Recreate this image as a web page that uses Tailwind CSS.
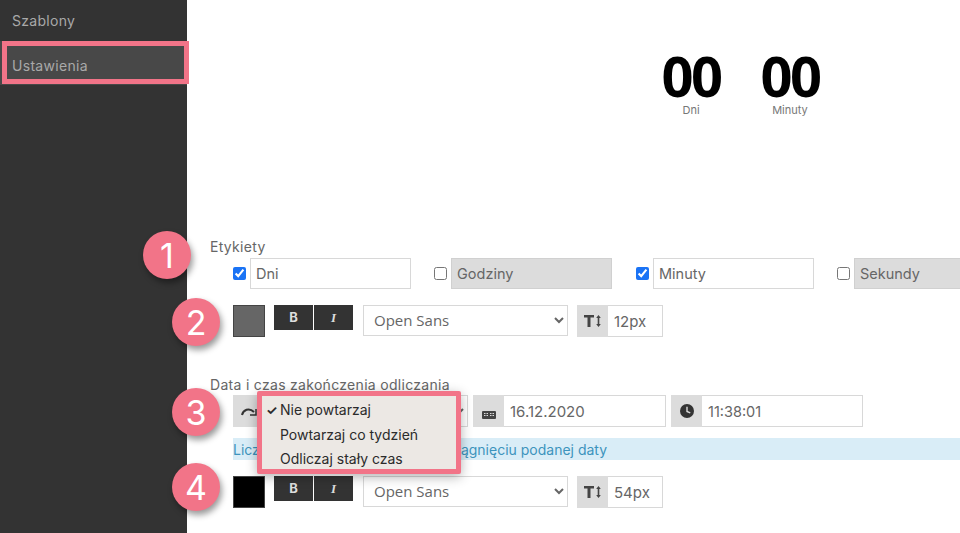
<!DOCTYPE html>
<html lang="pl">
<head>
    <meta charset="UTF-8">
    <meta name="viewport" content="width=device-width, initial-scale=1.0">
    <title>Ustawienia</title>
    <script src="https://cdn.jsdelivr.net/npm/@tailwindcss/browser@4"></script>
</head>
<body class="bg-white font-['Inter',sans-serif]">
<div class="relative flex h-[533px] w-[960px] overflow-hidden">

    <!-- Sidebar -->
    <aside class="w-[187px] shrink-0 bg-[#333333] text-[14px] tracking-[0.3px] text-[#a9a9a9]">
        <div class="h-[41px] pl-3 pt-[12px] leading-[18px]">Szablony</div>
        <div class="h-[44px] pl-3 pt-[16px] leading-[18px] bg-[#484848]">Ustawienia</div>
    </aside>

    <!-- Main -->
    <main class="min-w-0 flex-1 pl-[23px] text-[#666666]">
        <!-- Counter preview -->
        <div class="flex h-[238px] pl-[451px] pt-[48px]">
            <div class="w-[99px]">
                <div class="w-[60px] text-center font-['Open_Sans',sans-serif] text-[56px] font-bold leading-[54px] tracking-[-2.500px] text-black">00</div>
                <div class="mt-px w-[60px] text-center text-[11px] leading-[14px] text-[#777777]">Dni</div>
            </div>
            <div>
                <div class="w-[60px] text-center font-['Open_Sans',sans-serif] text-[56px] font-bold leading-[54px] tracking-[-2.500px] text-black">00</div>
                <div class="mt-px w-[60px] text-center text-[11px] leading-[14px] text-[#777777]">Minuty</div>
            </div>
        </div>

        <!-- Labels -->
        <div class="text-[14px] leading-[18px] tracking-[0.3px]">Etykiety</div>
        <div class="mt-[2px] flex h-[31px] w-[760px] items-center pl-[23px] text-[14.500px]">
            <input type="checkbox" checked class="m-0 size-[13px] shrink-0 accent-[#1a73f5]">
            <input value="Dni" class="ml-[4px] h-[31px] w-[161px] border border-[#d8d8d8] px-[5px] text-[#666666]">
            <input type="checkbox" class="m-0 ml-[23px] size-[13px] shrink-0">
            <input value="Godziny" disabled class="ml-[4px] h-[31px] w-[161px] border border-[#d0d0d0] bg-[#dcdcdc] px-[5px] text-[#666666]">
            <input type="checkbox" checked class="m-0 ml-[24px] size-[13px] shrink-0 accent-[#1a73f5]">
            <input value="Minuty" class="ml-[4px] h-[31px] w-[161px] border border-[#d8d8d8] px-[5px] text-[#666666]">
            <input type="checkbox" class="m-0 ml-[23px] size-[13px] shrink-0">
            <input value="Sekundy" disabled class="ml-[4px] h-[31px] w-[161px] shrink-0 border border-[#d0d0d0] bg-[#dcdcdc] px-[5px] text-[#666666]">
        </div>

        <!-- Label style -->
        <div class="mt-[16px] flex pl-[23px] text-[15px]">
            <div class="size-[32px] border border-[#444444] bg-[#666666]"></div>
            <div class="ml-[9px] flex h-[25px] gap-px">
                <div class="flex w-[39px] items-center justify-center bg-[#333333] text-[13px] font-bold text-[#dddddd]">B</div>
                <div class="flex w-[39px] items-center justify-center bg-[#333333] font-['Liberation_Serif',serif] text-[13px] font-bold italic text-[#dddddd]">I</div>
            </div>
            <select class="ml-[10px] h-[31px] w-[205px] border border-[#d8d8d8] bg-white pb-[2px] pl-[6px] text-[15px] text-[#666666] font-['Open_Sans',sans-serif]"><option>Open Sans</option></select>
            <div class="ml-[9px] flex h-[32px] w-[31px] items-center justify-center bg-[#dcdcdc]">
                <svg class="h-[12px] w-[17px]" viewBox="0 0 17 12" fill="#444444"><path d="M0 0h10v2.500H6.500V12h-3V2.500H0z"/><path d="M14.500 0l2.300 3h-1.500v6h1.500l-2.300 3-2.300-3h1.500V3h-1.500z"/></svg>
            </div>
            <input value="12px" class="h-[32px] w-[55px] border border-l-0 border-[#d8d8d8] px-[6px] text-[#666666]">
        </div>

        <!-- End date -->
        <div class="mt-[39px] text-[14px] leading-[18px] tracking-[0.3px]">Data i czas zakończenia odliczania</div>
        <div class="mt-[1px] flex pl-[23px] text-[15px]">
            <div class="flex h-[32px] w-[31px] items-center justify-center bg-[#dcdcdc]">
                <svg class="h-[9px] w-[16px]" viewBox="0 0 16 9" fill="none" stroke="#333333" stroke-width="2"><path d="M1 8C2 3 8 0 13 5"/><path d="M15 2v6H9" stroke-width="1.500"/></svg>
            </div>
            <select class="h-[32px] w-[204px] border border-[#d8d8d8] bg-white pl-[6px] text-[#666666]"><option>Nie powtarzaj</option></select>
            <div class="ml-[5px] flex h-[32px] w-[31px] items-end justify-center bg-[#dcdcdc] pb-[8px]">
                <svg class="h-[8px] w-[14px]" viewBox="0 0 14 8"><rect width="14" height="8" rx="1" fill="#444444"/><path d="M2 2.500h1.500M4.500 2.500H6M8 2.500h1.500M10.500 2.500H12M2 4.500h1.500M4.500 4.500H6M8 4.500h1.500M10.500 4.500H12" stroke="#dcdcdc" stroke-width="1"/></svg>
            </div>
            <input value="16.12.2020" class="h-[32px] w-[162px] border border-l-0 border-[#d8d8d8] px-[6px] text-[#666666]">
            <div class="ml-[5px] flex h-[32px] w-[31px] items-center justify-center bg-[#dcdcdc]">
                <svg class="size-[14px]" viewBox="0 0 15 15"><circle cx="7.500" cy="7.500" r="7.500" fill="#333333"/><path d="M7.500 3v5l3.500 1.500" fill="none" stroke="#dcdcdc" stroke-width="1.500"/></svg>
            </div>
            <input value="11:38:01" class="h-[32px] w-[161px] border border-l-0 border-[#d8d8d8] px-[6px] text-[14.500px] text-[#666666]">
        </div>
        <div class="ml-[23px] mt-[11px] h-[22px] bg-[#d9edf7] text-[14px] leading-[24px] text-[#3d94bd]">Licznik będzie odliczał czas do osiągnięciu podanej daty</div>

        <!-- Date style -->
        <div class="mt-[16px] flex pl-[23px] text-[15px]">
            <div class="size-[32px] border border-[#444444] bg-black"></div>
            <div class="ml-[9px] flex h-[25px] gap-px">
                <div class="flex w-[39px] items-center justify-center bg-[#333333] text-[13px] font-bold text-[#dddddd]">B</div>
                <div class="flex w-[39px] items-center justify-center bg-[#333333] font-['Liberation_Serif',serif] text-[13px] font-bold italic text-[#dddddd]">I</div>
            </div>
            <select class="ml-[10px] h-[31px] w-[205px] border border-[#d8d8d8] bg-white pb-[2px] pl-[6px] text-[15px] text-[#666666] font-['Open_Sans',sans-serif]"><option>Open Sans</option></select>
            <div class="ml-[9px] flex h-[32px] w-[31px] items-center justify-center bg-[#dcdcdc]">
                <svg class="h-[12px] w-[17px]" viewBox="0 0 17 12" fill="#444444"><path d="M0 0h10v2.500H6.500V12h-3V2.500H0z"/><path d="M14.500 0l2.300 3h-1.500v6h1.500l-2.300 3-2.300-3h1.500V3h-1.500z"/></svg>
            </div>
            <input value="54px" class="h-[32px] w-[55px] border border-l-0 border-[#d8d8d8] px-[6px] text-[#666666]">
        </div>
    </main>

    <!-- Sidebar highlight -->
    <div class="absolute left-[2px] top-[41px] h-[43px] w-[187px] border-[5px] border-[#f27488]"></div>

    <!-- Repeat dropdown, open -->
    <div class="absolute left-[257px] top-[391px] h-[83px] w-[204px] rounded-[2px] border-[5px] border-[#f27488] bg-[#ece8e4] pt-[2px] text-[14px] leading-[24.500px] text-[#2b2b2b] shadow-[0_3px_12px_rgba(0,0,0,0.3)]">
        <div class="relative pl-[18px]"><span class="absolute left-[4px] text-[13px] font-bold">✓</span>Nie powtarzaj</div>
        <div class="pl-[18px]">Powtarzaj co tydzień</div>
        <div class="pl-[18px]">Odliczaj stały czas</div>
    </div>

    <!-- Numbered callouts -->
    <div class="absolute left-[143px] top-[231px] flex size-[48px] items-center justify-center rounded-full bg-[#f27488] text-[34px] text-white shadow-[2px_4px_6px_rgba(0,0,0,0.4)]">1</div>
    <div class="absolute left-[172px] top-[298px] flex size-[48px] items-center justify-center rounded-full bg-[#f27488] text-[34px] text-white shadow-[2px_4px_6px_rgba(0,0,0,0.4)]">2</div>
    <div class="absolute left-[172px] top-[388px] flex size-[48px] items-center justify-center rounded-full bg-[#f27488] text-[34px] text-white shadow-[2px_4px_6px_rgba(0,0,0,0.4)]">3</div>
    <div class="absolute left-[172px] top-[463px] flex size-[48px] items-center justify-center rounded-full bg-[#f27488] text-[34px] text-white shadow-[2px_4px_6px_rgba(0,0,0,0.4)]">4</div>
</div>
</body>
</html>
